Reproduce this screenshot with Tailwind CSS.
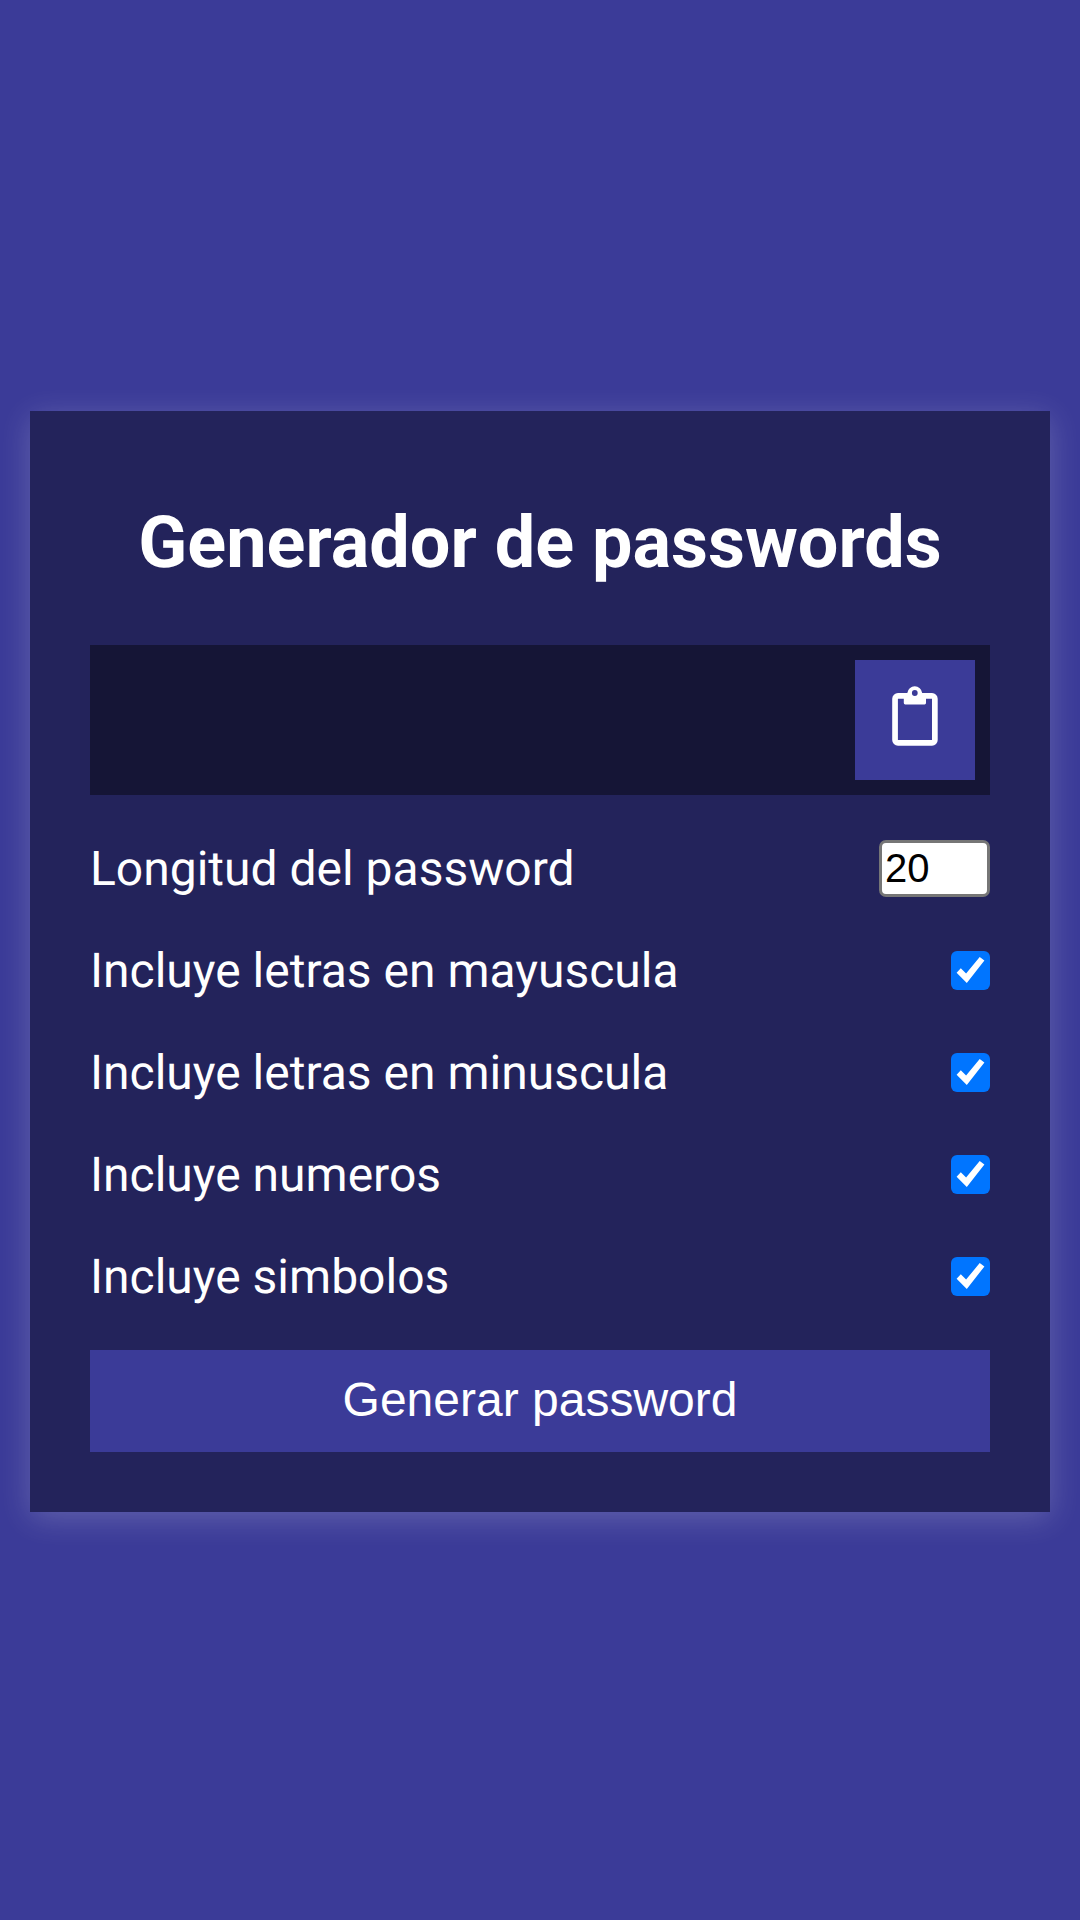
<!DOCTYPE html>
<html lang="es">
<head>
<meta charset="utf-8">
<title>Generador de passwords</title>
<script src="https://cdn.jsdelivr.net/npm/@tailwindcss/browser@4"></script>
</head>
<body class="bg-[#3b3b98] text-white font-['Roboto',sans-serif] [text-rendering:geometricPrecision] h-screen overflow-hidden flex items-center justify-center p-[30px]">
<svg class="hidden"><symbol id="check" viewBox="0 0 39 39"><rect width="39" height="39" rx="6" fill="#0075ff"/><path fill="#fff" d="M5.6 21.7 9.8 17.3 15.1 22.6 28.7 6 33.4 9.5 15.8 32Z"/></symbol></svg>
<main class="w-full bg-[#23235b] p-[60px] mt-[3px] shadow-[0_6px_30px_rgba(255,255,255,0.2)]">
  <h2 class="mt-[30px] mb-[60px] text-[72px] leading-[84px] font-bold text-center whitespace-nowrap">Generador de passwords</h2>
  <div class="h-[150px] bg-black/40 p-[15px] flex justify-end">
    <button class="size-[120px] bg-[#3b3b98] flex items-center justify-center pb-2" aria-label="Copiar">
      <svg class="w-[46px] h-[62px]" viewBox="0 0 46 62"><path fill="#fff" fill-rule="evenodd" d="M6 8H15.3A7.5 7.5 0 0 1 30.2 8H40A5.8 5.8 0 0 1 45.7 13.7V55A5.8 5.8 0 0 1 40 60.8H6A5.8 5.8 0 0 1 .2 55V13.7A5.8 5.8 0 0 1 6 8ZM5.9 13.7V55H40V13.7H34V18Q34 19.4 32.6 19.4H13.2Q11.8 19.4 11.8 18V13.7ZM22.8 5.1A2.9 2.9 0 1 0 22.8 10.9 2.9 2.9 0 0 0 22.8 5.1Z"/></svg>
    </button>
  </div>
  <div class="my-[45px] flex flex-col gap-[45px] text-[48px] leading-[57px]">
    <div class="h-[57px] flex items-center justify-between"><label>Longitud del password</label><input value="20" class="w-[111px] h-[57px] bg-white text-black text-[40px] leading-[45px] font-['Liberation_Sans',sans-serif] border-3 border-[#767676] rounded-[7px] px-[3px] py-0"></div>
    <div class="h-[57px] flex items-center justify-between"><label>Incluye letras en mayuscula</label><svg class="size-[39px]"><use href="#check"/></svg></div>
    <div class="h-[57px] flex items-center justify-between"><label>Incluye letras en minuscula</label><svg class="size-[39px]"><use href="#check"/></svg></div>
    <div class="h-[57px] flex items-center justify-between"><label>Incluye numeros</label><svg class="size-[39px]"><use href="#check"/></svg></div>
    <div class="h-[57px] flex items-center justify-between"><label>Incluye simbolos</label><svg class="size-[39px]"><use href="#check"/></svg></div>
  </div>
  <button class="block w-full h-[102px] pb-[2px] bg-[#3b3b98] text-[48px] leading-[54px] font-['Liberation_Sans',sans-serif]">Generar password</button>
</main>
</body>
</html>
